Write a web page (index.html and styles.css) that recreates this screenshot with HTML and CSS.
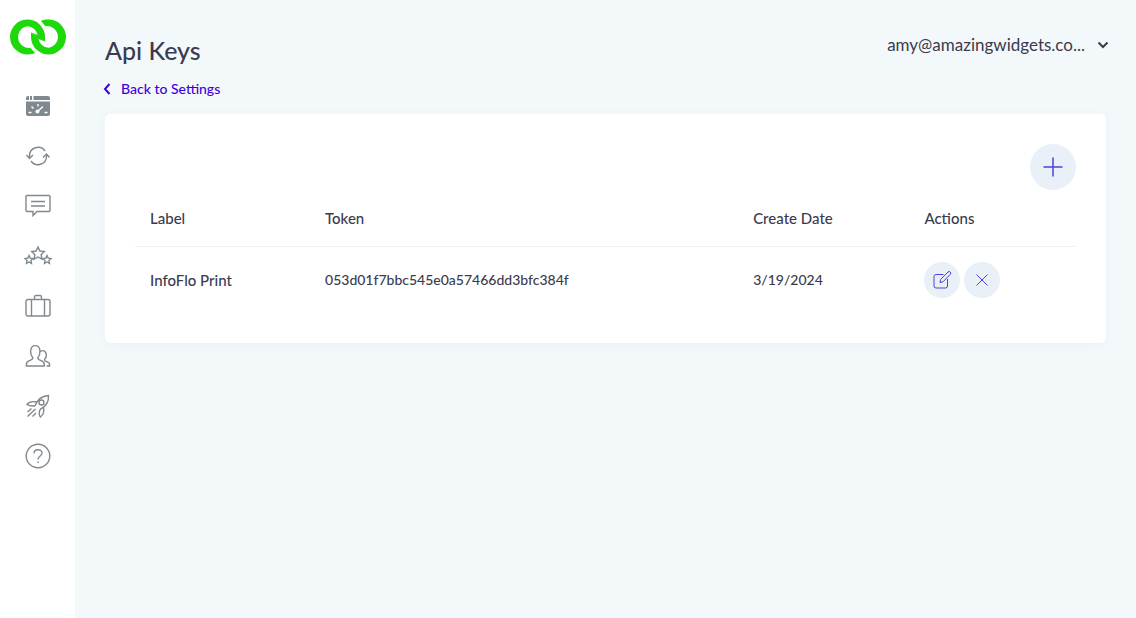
FILE: index.html
```html
<!DOCTYPE html>
<html lang="en">
<head>
    <meta charset="UTF-8">
    <meta name="viewport" content="width=device-width, initial-scale=1.0">
    <title>Api Keys</title>
    <link rel="stylesheet" href="styles.css">
</head>
<body>
    <nav class="sidebar">
        <a href="#" class="logo" aria-label="Home">
            <svg width="56" height="36" viewBox="10 19.5 56 36">
                <path d="M35 53.6C33 54.6 30 55 27.5 55A17.5 17.5 0 0 1 27.5 20A17.5 17.5 0 0 1 45 37.5V42L37.6 36A10.8 10.8 0 0 0 27.5 26.7A10.8 10.8 0 1 0 30.5 48.3Z"/>
                <path d="M41 21.4C43 20.4 46 20 48.5 20A17.5 17.5 0 0 1 48.5 55A17.5 17.5 0 0 1 31 37.5V33L38.4 39A10.8 10.8 0 0 0 48.5 48.3A10.8 10.8 0 1 0 45.5 26.7Z"/>
                <path d="M31 33L37.6 35.5L45 42L38.4 39.5Z"/>
            </svg>
        </a>
        <a href="#" class="nav-link" aria-label="Dashboard">
            <svg width="26" height="26" viewBox="0 0 26 26">
                <path class="solid" d="M1 7V5a2 2 0 0 1 2-2h1v4zM5 3h2v4H5zM8.500 3H23a2 2 0 0 1 2 2v2H8.500zM1 8.500h24V21a2 2 0 0 1-2 2H3a2 2 0 0 1-2-2z"/>
                <path class="cut" d="M3.500 19.500h3M19.500 19.500h3M6.500 13.500l2 2M13 11v2.500M12.500 18.500l5.500-5"/>
                <circle class="hole" cx="12.500" cy="18.500" r="2"/>
            </svg>
        </a>
        <a href="#" class="nav-link" aria-label="Sync">
            <svg width="26" height="26" viewBox="0 0 26 26">
                <path d="M4.500 15V13A8.500 8.500 0 0 1 20 8M21.500 11V13A8.500 8.500 0 0 1 6 18M1.500 12l3 3.500 3.500-3.500M18 14.500l3.500-3.500 3 3.500"/>
            </svg>
        </a>
        <a href="#" class="nav-link" aria-label="Messages">
            <svg width="26" height="26" viewBox="0 0 26 26">
                <path d="M2 2.500h22a1 1 0 0 1 1 1v14a1 1 0 0 1-1 1H12l-4 4v-4H2a1 1 0 0 1-1-1v-14a1 1 0 0 1 1-1zM6 8.500h14M6 13h14"/>
            </svg>
        </a>
        <a href="#" class="nav-link" aria-label="Reviews">
            <svg width="30" height="26" viewBox="0 0 30 26">
                <path d="M15 4l1.900 4 4.400.6-3.200 3.100.8 4.400-3.900-2.100-3.900 2.100.8-4.400-3.200-3.100 4.400-.6zM6 12.500l1.200 2.600 2.800.4-2 2 .5 2.900L6 19l-2.500 1.400.5-2.900-2-2 2.800-.4zM24 12.500l1.200 2.600 2.800.4-2 2 .5 2.900L24 19l-2.500 1.400.5-2.900-2-2 2.800-.4z"/>
            </svg>
        </a>
        <a href="#" class="nav-link" aria-label="Jobs">
            <svg width="26" height="26" viewBox="0 0 26 26">
                <path d="M3 6.500h20a2 2 0 0 1 2 2V21a2 2 0 0 1-2 2H3a2 2 0 0 1-2-2V8.500a2 2 0 0 1 2-2zM6.500 6.500V23M19.500 6.500V23M9.500 6.500V4A1.500 1.500 0 0 1 11 2.500h4A1.500 1.500 0 0 1 16.500 4v2.500"/>
            </svg>
        </a>
        <a href="#" class="nav-link" aria-label="Contacts">
            <svg width="26" height="26" viewBox="0 0 26 26">
                <path d="M1.500 23c-.7-3.500.5-4.500 3-5.400 2.500-.8 3.700-1.300 3.200-3-2.500-2.600-3.700-12 2.600-12s5.100 9.400 2.600 12c-.5 1.700.7 2.200 3.200 3 2.500.9 3.700 1.900 3.200 5.400zM15.500 8.300c6-3 7 5 4.200 8-.4 1.500.6 2 2.200 2.400 2.200.7 3 2 2.700 4.300h-3"/>
            </svg>
        </a>
        <a href="#" class="nav-link" aria-label="Launch">
            <svg width="26" height="26" viewBox="0 0 26 26">
                <path d="M10 13c2-6 7-10 13.500-10.500C24 9 20 14 15 16.500M11.500 9C7 8 4 8.500 2 11.500c2.500 2 5 1.500 8 1.500M18.500 14.500c1 4 0 7-3 9.500-2-2-1.500-4.500-.5-7.500M2.500 19l4-3.500M2.500 23.500l8-7.500M7.500 23.500l3.500-3.500"/>
                <circle cx="16.500" cy="9.500" r="2.500"/>
            </svg>
        </a>
        <a href="#" class="nav-link" aria-label="Help">
            <svg width="26" height="26" viewBox="0 0 26 26">
                <circle cx="13" cy="13" r="11.800"/>
                <path d="M9 10.500c0-5 8-5 8-.5 0 3-4 3-4 6.500M13 18.500v1.500"/>
            </svg>
        </a>
    </nav>

    <main class="content">
        <header class="page-header">
            <div>
                <h1>Api Keys</h1>
                <a href="#" class="back-link">
                    <svg width="8" height="14" viewBox="0 0 8 14"><path d="M6.500 2L2 7l4.500 5"/></svg>
                    Back to Settings
                </a>
            </div>
            <button type="button" class="account">
                amy@amazingwidgets.co...
                <svg width="12" height="8" viewBox="0 0 12 8"><path d="M1.500 1.500L6 6l4.500-4.500"/></svg>
            </button>
        </header>

        <section class="card">
            <div class="toolbar">
                <button type="button" class="round-btn add-btn" aria-label="Add key">
                    <svg width="22" height="22" viewBox="0 0 22 22"><path d="M11 1.500v19M1.500 11h19"/></svg>
                </button>
            </div>
            <table>
                <thead>
                    <tr>
                        <th class="col-label">Label</th>
                        <th class="col-token">Token</th>
                        <th class="col-date">Create Date</th>
                        <th>Actions</th>
                    </tr>
                </thead>
                <tbody>
                    <tr>
                        <td>InfoFlo Print</td>
                        <td class="value">053d01f7bbc545e0a57466dd3bfc384f</td>
                        <td class="value">3/19/2024</td>
                        <td>
                            <div class="actions">
                                <button type="button" class="round-btn" aria-label="Edit key">
                                    <svg width="20" height="20" viewBox="0 0 20 20"><path d="M11.500 4.500H4A2 2 0 0 0 2 6.500V16a2 2 0 0 0 2 2h9.500a2 2 0 0 0 2-2V9M8 12.500l.6-3L16 2a1.600 1.600 0 0 1 2.300 2.300L11 11.800z"/></svg>
                                </button>
                                <button type="button" class="round-btn" aria-label="Delete key">
                                    <svg width="14" height="14" viewBox="0 0 14 14"><path d="M1.500 1.500l11 11M12.500 1.500l-11 11"/></svg>
                                </button>
                            </div>
                        </td>
                    </tr>
                </tbody>
            </table>
        </section>
    </main>
</body>
</html>
```
FILE: styles.css
```css
* {
    margin: 0;
    padding: 0;
    box-sizing: border-box;
}

body {
    font-family: Lato, "Open Sans", sans-serif;
    font-size: 15px;
    font-weight: 500;
    line-height: 20px;
    background-color: #f3f8fb;
    color: #3b3b4f;
    display: flex;
    min-height: 100vh;
}

a {
    text-decoration: none;
}

button {
    border: none;
    font: inherit;
    color: inherit;
    cursor: pointer;
}

svg {
    display: block;
    fill: none;
    stroke: currentColor;
}

.sidebar {
    flex: none;
    width: 75px;
    background-color: #fff;
    display: flex;
    flex-direction: column;
    align-items: center;
    padding-top: 19px;
}

.logo {
    margin-bottom: 26px;
}

.logo svg {
    fill: #1ed90a;
    stroke: none;
}

.nav-link {
    height: 50px;
    display: flex;
    align-items: center;
    color: #7f8990;
}

.nav-link svg {
    stroke-width: 1.4;
}

.nav-link .solid {
    fill: currentColor;
    stroke: none;
}

.nav-link .cut {
    stroke: #fff;
}

.nav-link .hole {
    fill: #fff;
    stroke: none;
}

.content {
    flex: 1;
    padding: 30px;
}

.page-header {
    display: flex;
    justify-content: space-between;
    align-items: flex-start;
    margin-bottom: 15px;
}

h1 {
    font-size: 25px;
    font-weight: 500;
    line-height: 40px;
    margin-bottom: 9px;
}

.back-link {
    display: flex;
    align-items: center;
    gap: 10px;
    margin-left: -2px;
    font-size: 14px;
    color: #4000dd;
}

.back-link svg,
.account svg {
    stroke-width: 2;
}

.account {
    display: flex;
    align-items: center;
    gap: 12px;
    margin-top: 5px;
    margin-right: -3px;
    background: none;
    font-size: 17px;
    font-weight: 400;
}

.card {
    background-color: #fff;
    border-radius: 5px;
    padding: 30px;
    box-shadow: 0 2px 10px rgba(60, 100, 130, 0.05);
}

.toolbar {
    display: flex;
    justify-content: flex-end;
}

.round-btn {
    width: 36px;
    height: 36px;
    border-radius: 50%;
    background-color: #e9f0f7;
    color: #4a43dc;
    display: flex;
    align-items: center;
    justify-content: center;
}

.add-btn {
    width: 46px;
    height: 46px;
}

.add-btn svg {
    stroke-width: 1.5;
}

table {
    width: 100%;
    border-collapse: separate;
    border-spacing: 0;
    table-layout: fixed;
}

th,
td {
    padding: 15px;
    text-align: left;
    font-weight: 500;
}

th {
    height: 57px;
    border-bottom: 1px solid #e9f0f7;
}

.col-label {
    width: 18.6%;
}

.col-token {
    width: 45.5%;
}

.col-date {
    width: 18.2%;
}

.value {
    font-size: 14px;
}

.actions {
    display: flex;
    gap: 4px;
}
```
